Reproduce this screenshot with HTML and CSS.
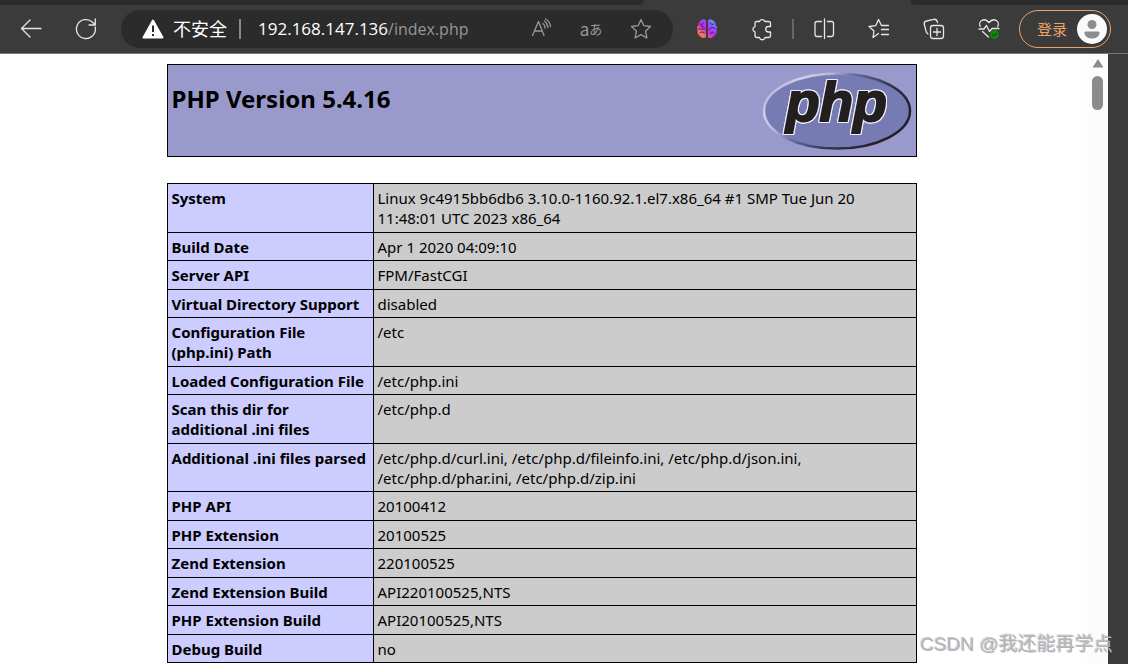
FILE: index.html
```html
<!DOCTYPE html>
<html lang="zh-CN">
<head>
<meta charset="utf-8">
<title>phpinfo()</title>
<link rel="stylesheet" href="styles.css">
</head>
<body>
<div class="browser">
  <div class="tabs"><div class="tabs-left"></div><div class="tabs-right"></div></div>
  <header class="toolbar">
    <nav class="nav">
      <button class="icon" aria-label="Back"><svg viewBox="0 0 24 24"><path d="M22 11.500H2.500M11 3L2.500 11.500L11 20"/></svg></button>
      <button class="icon" aria-label="Refresh"><svg viewBox="0 0 24 24"><path d="M21.200 10A9.500 9.500 0 1 1 18.500 5.200L21 7.500M21.300 2V8H15"/></svg></button>
    </nav>
    <div class="address">
      <button class="security"><svg class="warn" viewBox="0 0 22 20"><path d="M11 1.500L20.500 18.500H1.500Z" fill="#fff" stroke="#fff" stroke-width="2" stroke-linejoin="round"/><path d="M11 6.500V13M11 15V17" stroke="#2b2b2b" stroke-width="2"/></svg><span>不安全</span></button>
      <span class="rule"></span>
      <div class="url"><span class="host">192.168.147.136</span>/index.php</div>
      <div class="tools">
        <button class="icon" aria-label="Read aloud"><svg viewBox="0 0 24 24"><path d="M3.500 18.500L9.500 4.500L15 18.500M5.500 14H13M14 6.500Q16 8 16 11M15.500 4Q18.500 6.500 18.800 10.500M16.500 2Q21 4.500 21.500 9.500"/></svg></button>
        <button class="icon translate" aria-label="Translate"><span class="latin">a</span>あ</button>
        <button class="icon" aria-label="Favorite"><svg viewBox="0 0 24 24"><path d="M12 2.500L14.800 8.700L21.500 9.500L16.500 14.200L17.900 21L12 17.600L6.100 21L7.500 14.200L2.500 9.500L9.200 8.700Z"/></svg></button>
      </div>
    </div>
    <div class="actions">
      <button class="icon" aria-label="Brain"><svg viewBox="0 0 24 24"><defs><linearGradient id="b" x1="0" y1="1" x2="1" y2="0"><stop offset="0" stop-color="#ff8a32"/><stop offset=".28" stop-color="#f36a6f"/><stop offset=".45" stop-color="#c629e4"/><stop offset=".65" stop-color="#9b4cff"/><stop offset="1" stop-color="#38c5ff"/></linearGradient></defs><path d="M11 3.500Q8 1 5.500 4Q3 5 3.500 8Q1 10.500 2.500 13.500Q2 17 4.500 18.500Q6 22 11 20.500ZM13 3.500Q16 1 18.500 4Q21 5 20.500 8Q23 10.500 21.500 13.500Q22 17 19.500 18.500Q18 22 13 20.500Z" fill="url(#b)" stroke="none"/><path d="M5 7Q8 8.500 9 5.500M3 12H10M6 9L9 10M5 16Q8 13.500 10 16.500M15 5.500Q16 8.500 19 7M14 12Q18 9 21 12M15 17Q17 13.500 19.500 16" stroke="#4a236f" stroke-width="1"/></svg></button>
      <button class="icon" aria-label="Extensions"><svg viewBox="0 0 24 24"><path d="M6.500 4.500H9.500A2.800 2.800 0 0 1 14.800 4.500H18.500Q20.500 4.500 20.500 6.500V9.500H18.500A2.700 2.700 0 0 0 18.500 15H20.500V18.500Q20.500 20.500 18.500 20.500H15A2.800 2.800 0 0 1 9.500 20.500H7Q5 20.500 5 18.500V15A2.800 2.800 0 0 1 5 9.600V6Q5 4.500 6.500 4.500Z"/></svg></button>
      <span class="divider"></span>
      <button class="icon" aria-label="Split screen"><svg viewBox="0 0 24 24"><path d="M12.500 2V21.500M9.500 4.500H5Q3 4.500 3 6.500V17Q3 19.500 5 19.500H9.500M15.500 4.500H19.500Q21.500 4.500 21.500 6.500V17Q21.500 19.500 19.500 19.500H15.500"/></svg></button>
      <button class="icon" aria-label="Favorites"><svg viewBox="0 0 24 24"><path d="M11.500 16.500L6 20.500L7 14L2 9.500L8.700 8.700L11.500 2.500L14.500 8.500H21.500M14.500 12.500H21.500M14.500 17.500H21.500"/></svg></button>
      <button class="icon" aria-label="Collections"><svg viewBox="0 0 24 24"><rect x="8.500" y="8.500" width="13" height="13" rx="2.500"/><path d="M15 11.500V18.500M11.500 15H18.500M6 17Q4.500 16 4 14L2.200 7Q2 4.500 4.500 4L12 2.300Q15 2 15.500 5.500"/></svg></button>
      <button class="icon" aria-label="Browser essentials"><svg viewBox="0 0 24 24"><path d="M3.300 9.500C0.500 5 7 -.500 12 5.500C17 -.500 23.500 5 20.700 9.500M2 12H7L9.500 8.500L12.500 14.500L15 11.500H22M5.500 14.500L11.500 20"/><circle cx="17.500" cy="17.500" r="4.500" fill="#128012" stroke="none"/><path d="M15.500 17.500L17 19L19.800 16.200" stroke="#07460b" stroke-width="1"/></svg></button>
      <button class="login"><span>登录</span><svg viewBox="0 0 30 30"><circle cx="15" cy="15" r="15" fill="#fafafa"/><circle cx="15" cy="10.500" r="4.500" fill="#8d8d8d"/><path d="M8 18H22V19C22 22 19 24 15 24S8 22 8 19Z" fill="#8d8d8d" stroke="#8d8d8d" stroke-linejoin="round"/></svg></button>
    </div>
  </header>
  <div class="window">
    <main class="page">
      <section class="banner">
        <h1>PHP Version 5.4.16</h1>
        <svg class="logo" viewBox="0 0 150 80" role="img" aria-label="PHP logo">
          <defs><linearGradient id="rim" x1="0" y1="0" x2="1" y2=".5"><stop offset="0" stop-color="#8f92c4"/><stop offset=".22" stop-color="#d0d0ea"/><stop offset=".36" stop-color="#b9bada"/><stop offset=".5" stop-color="#6a6ea4"/><stop offset=".75" stop-color="#34334b"/><stop offset="1" stop-color="#231f28"/></linearGradient></defs>
          <ellipse cx="75" cy="41" rx="73" ry="37.500" fill="#777bb4" stroke="url(#rim)" stroke-width="2.500"/>
          <text x="24" y="51" class="logo-text">php</text>
        </svg>
      </section>
      <table class="info">
        <colgroup><col class="key"><col></colgroup>
        <tbody>
        <tr><th scope="row">System</th><td>Linux 9c4915bb6db6 3.10.0-1160.92.1.el7.x86_64 #1 SMP Tue Jun 20<br>11:48:01 UTC 2023 x86_64</td></tr>
        <tr><th scope="row">Build Date</th><td>Apr 1 2020 04:09:10</td></tr>
        <tr><th scope="row">Server API</th><td>FPM/FastCGI</td></tr>
        <tr><th scope="row">Virtual Directory Support</th><td>disabled</td></tr>
        <tr><th scope="row">Configuration File<br>(php.ini) Path</th><td>/etc</td></tr>
        <tr><th scope="row">Loaded Configuration File</th><td>/etc/php.ini</td></tr>
        <tr><th scope="row">Scan this dir for<br>additional .ini files</th><td>/etc/php.d</td></tr>
        <tr><th scope="row">Additional .ini files parsed</th><td>/etc/php.d/curl.ini, /etc/php.d/fileinfo.ini, /etc/php.d/json.ini,<br>/etc/php.d/phar.ini, /etc/php.d/zip.ini</td></tr>
        <tr><th scope="row">PHP API</th><td>20100412</td></tr>
        <tr><th scope="row">PHP Extension</th><td>20100525</td></tr>
        <tr><th scope="row">Zend Extension</th><td>220100525</td></tr>
        <tr><th scope="row">Zend Extension Build</th><td>API220100525,NTS</td></tr>
        <tr><th scope="row">PHP Extension Build</th><td>API20100525,NTS</td></tr>
        <tr><th scope="row">Debug Build</th><td>no</td></tr>
        </tbody>
      </table>
    </main>
    <div class="scrollbar"><svg viewBox="0 0 12 9"><path d="M6 0L11.500 8.500H.500Z" fill="#8b8b8b"/></svg><div class="thumb"></div></div>
  </div>
  <div class="watermark">CSDN @我还能再学点</div>
</div>
</body>
</html>
```
FILE: styles.css
```css
* { box-sizing: border-box; }
body { margin: 0; background: #3b3b3b; font-family: "Noto Sans", "Noto Sans CJK SC", sans-serif; }
button { padding: 0; border: 0; background: none; color: inherit; font: inherit; }
.browser { position: relative; display: flex; flex-direction: column; height: 100vh; overflow: hidden; }
.tabs { display: flex; justify-content: space-between; flex: none; height: 5px; }
.tabs-left { width: 57.1%; background: #2b2b2b; border-radius: 0 0 5px 0; }
.tabs-right { width: 19.3%; background: #2b2b2b; border-radius: 0 0 0 5px; }
.toolbar { display: flex; align-items: center; flex: none; height: 49px; padding: 0 17px 1px 19px; border-bottom: 1px solid #777; color: #fff; }
.nav { display: flex; gap: 31px; margin-right: 23px; }
.icon { display: block; flex: none; width: 24px; height: 24px; }
.icon svg { display: block; width: 24px; height: 24px; fill: none; stroke: #e6e6e6; stroke-width: 1.3; stroke-linecap: round; stroke-linejoin: round; }
.address { display: flex; align-items: center; flex: 1; height: 38px; padding: 0 20px 0 21px; border-radius: 19px; background: #2b2b2b; }
.security { display: flex; align-items: center; gap: 9px; font-size: 18px; line-height: 24px; }
.warn { width: 22px; height: 20px; }
.rule { width: 2px; height: 20px; margin: 0 17px 0 12px; background: #888; }
.url { flex: 1; color: #969696; font-family: "Open Sans", sans-serif; font-size: 16px; line-height: 24px; white-space: nowrap; }
.host { color: #fff; font-size: 17px; }
.tools { display: flex; gap: 26px; color: #999; }
.tools .icon svg { stroke: #999; }
.translate { display: flex; align-items: center; justify-content: center; font: 13px/24px "Noto Sans CJK JP", sans-serif; white-space: nowrap; }
.latin { font-size: 17px; line-height: 22px; }
.actions { display: flex; align-items: center; gap: 31px; margin-left: 22px; }
.divider { width: 2px; height: 20px; margin: 0 -13px; background: #666; }
.login { display: flex; align-items: center; justify-content: space-between; width: 92px; height: 38px; margin-left: -13px; padding: 0 3px 0 17px; border: 1px solid #f0a264; border-radius: 19px; color: #f0a264; font-size: 15px; }
.login svg { width: 30px; height: 30px; }
.window { display: flex; flex: 1; min-height: 0; margin-right: 20px; overflow: hidden; background: #fff; }
.page { flex: 1; padding: 10px 4px 0 0; }
.banner { display: flex; align-items: flex-start; justify-content: space-between; width: 750px; min-height: 93px; margin: 0 auto 26px; padding: 5px 4px; border: 1px solid #000; background: #9999cc; }
.banner h1 { margin: 12px 0 0; font: bold 24px/34px "Noto Sans", sans-serif; }
.logo { width: 150px; height: 80px; }
.logo-text { font: italic bold 55px "Liberation Sans", sans-serif; fill: #231f20; stroke: #231f20; stroke-width: 2px; filter: drop-shadow(1px 0 0 #eeeef8) drop-shadow(-1px 0 0 #eeeef8) drop-shadow(0 1px 0 #eeeef8) drop-shadow(0 -1px 0 #eeeef8); }
.info { width: 750px; margin: 0 auto; border-collapse: collapse; table-layout: fixed; font: 15px/20px "Noto Sans", sans-serif; color: #000; }
.key { width: 206px; }
.info th, .info td { padding: 4px; border: 1px solid #000; text-align: left; vertical-align: top; }
.info tr:nth-child(even) > * { padding-bottom: 3px; }
.info th { background: #ccccff; white-space: nowrap; }
.info td { background: #cccccc; }
.scrollbar { display: flex; flex-direction: column; align-items: center; gap: 8px; width: 21px; padding-top: 5px; background: #fcfcfc; }
.scrollbar svg { width: 12px; height: 9px; }
.thumb { width: 11px; height: 34px; border-radius: 6px; background: #8b8b8b; }
.watermark { position: absolute; right: 15px; bottom: 5px; color: #b4b4b4; font: 19px/28px "Liberation Sans", "Noto Sans CJK SC", sans-serif; text-shadow: -1px -1px 1px #8888; white-space: nowrap; }
```
